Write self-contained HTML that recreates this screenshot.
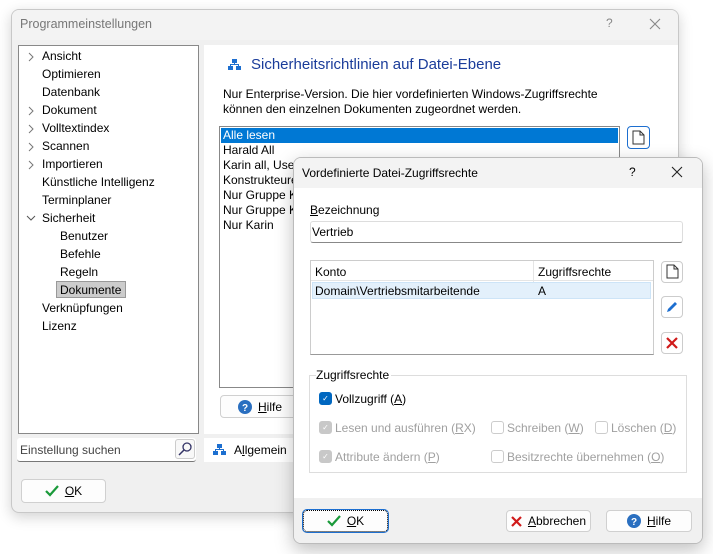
<!DOCTYPE html>
<html><head><meta charset="utf-8"><style>
*{box-sizing:border-box;margin:0;padding:0}
body{width:713px;height:554px;background:#fff;font-family:"Liberation Sans",sans-serif;font-size:12px;color:#000;position:relative;overflow:hidden}
.abs{position:absolute}
.win{left:11px;top:9px;width:668px;height:504px;background:#f0f0f0;border:1px solid #c8c8c8;border-radius:8px;box-shadow:0 4px 14px rgba(0,0,0,.18);overflow:hidden}
.tb{background:#f3f3f3}
.btn{position:absolute;background:#fdfdfd;border:1px solid #d0d0d0;border-radius:4px;height:23px;display:flex;align-items:center;justify-content:center;gap:6px;font-size:12px}
.t{position:absolute;white-space:nowrap}
.u{text-decoration:underline}
.cb{position:absolute;width:13px;height:13px;border:1px solid #ccc;border-radius:3px;background:#fff}
.cbg{background:#c8c8c8;border-color:#c8c8c8}
.gr{color:#a0a0a0}
.chev{position:absolute;left:27px}
</style></head><body>
<div class="abs win">
 <div class="abs tb" style="left:0;top:0;width:668px;height:30px"></div>
 <div class="t" style="left:8px;top:7px;color:#777;font-size:12.5px">Programmeinstellungen</div>
 <div class="t" style="left:594px;top:6px;color:#888">?</div>
 <svg class="abs" style="left:637px;top:8px" width="12" height="12"><path d="M1 1l10 10M11 1L1 11" stroke="#888" stroke-width="1.1"/></svg>
 <div class="abs" style="left:6px;top:35px;width:181px;height:389px;background:#fff;border:1px solid #888"></div>
 <div class="abs" style="left:192px;top:35px;width:476px;height:389px;background:#fff"></div>
</div>
<!-- tree chevrons -->
<svg class="chev" style="top:52px" width="8" height="10"><path d="M2 1l4 4-4 4" fill="none" stroke="#777"/></svg>
<svg class="chev" style="top:106px" width="8" height="10"><path d="M2 1l4 4-4 4" fill="none" stroke="#777"/></svg>
<svg class="chev" style="top:124px" width="8" height="10"><path d="M2 1l4 4-4 4" fill="none" stroke="#777"/></svg>
<svg class="chev" style="top:142px" width="8" height="10"><path d="M2 1l4 4-4 4" fill="none" stroke="#777"/></svg>
<svg class="chev" style="top:160px" width="8" height="10"><path d="M2 1l4 4-4 4" fill="none" stroke="#777"/></svg>
<svg class="abs" style="left:26px;top:214px" width="10" height="8"><path d="M1 2l4 4 4-4" fill="none" stroke="#555"/></svg>
<div class="t" style="left:42px;top:47px;line-height:18px">Ansicht<br>Optimieren<br>Datenbank<br>Dokument<br>Volltextindex<br>Scannen<br>Importieren<br>Künstliche Intelligenz<br>Terminplaner<br>Sicherheit</div>
<div class="t" style="left:60px;top:227px;line-height:18px">Benutzer<br>Befehle<br>Regeln</div>
<div class="abs" style="left:56px;top:281px;width:70px;height:17px;background:#ccc;border:1px solid #999"></div>
<div class="t" style="left:60px;top:281px;line-height:18px">Dokumente</div>
<div class="t" style="left:42px;top:299px;line-height:18px">Verknüpfungen<br>Lizenz</div>
<!-- search -->
<div class="abs" style="left:17px;top:438px;width:179px;height:24px;background:#fff;border-bottom:1px solid #777;border-radius:3px"></div>
<div class="t" style="left:20px;top:443px;color:#444">Einstellung suchen</div>
<div class="abs" style="left:175px;top:439px;width:20px;height:20px;border:1px solid #ccc;border-radius:3px;background:#f8f8f8"></div>
<svg class="abs" style="left:177px;top:441px" width="16" height="16"><circle cx="10" cy="6" r="4" fill="none" stroke="#336" stroke-width="1.3"/><line x1="7" y1="9" x2="2" y2="14" stroke="#336" stroke-width="1.5"/></svg>
<!-- right panel -->
<svg class="abs" style="left:228px;top:59px" width="14" height="11"><rect x="4" y="0" width="5" height="4" fill="#1d6fd0"/><rect x="0" y="7" width="5" height="4" fill="#1d6fd0"/><rect x="8" y="7" width="5" height="4" fill="#1d6fd0"/><path d="M6.5 4v2M2.5 7V5.5h8V7" stroke="#1d6fd0" fill="none"/></svg>
<div class="t" style="left:251px;top:56px;font-size:15px;color:#1a3c9a">Sicherheitsrichtlinien auf Datei-Ebene</div>
<div class="t" style="left:223px;top:87px;line-height:15px">Nur Enterprise-Version. Die hier vordefinierten Windows-Zugriffsrechte<br>können den einzelnen Dokumenten zugeordnet werden.</div>
<div class="abs" style="left:219px;top:126px;width:401px;height:262px;background:#fff;border:1px solid #888"></div>
<div class="abs" style="left:221px;top:128px;width:397px;height:15px;background:#0078d4"></div>
<div class="t" style="left:223px;top:128px;line-height:15px;color:#fff">Alle lesen</div>
<div class="t" style="left:223px;top:143px;line-height:15px">Harald All<br>Karin all, User<br>Konstrukteure<br>Nur Gruppe K<br>Nur Gruppe K<br>Nur Karin</div>
<div class="abs" style="left:627px;top:126px;width:23px;height:23px;border:1px solid #1d6fd0;border-radius:4px;background:#fff"></div>
<svg class="abs" style="left:632px;top:130px" width="13" height="15"><path d="M1 1h7l4 4v9H1z M8 1v4h4" fill="#fff" stroke="#333"/></svg>
<div class="btn" style="left:220px;top:395px;width:80px"><svg width="14" height="14"><circle cx="7" cy="7" r="7" fill="#2a6fc0"/><text x="7" y="11" font-size="10" font-weight="bold" text-anchor="middle" fill="#fff" font-family="Liberation Sans">?</text></svg><span><span class="u">H</span>ilfe</span></div>
<div class="abs" style="left:204px;top:438px;width:100px;height:24px;background:#fff"></div>
<svg class="abs" style="left:213px;top:444px" width="14" height="11"><rect x="4" y="0" width="5" height="4" fill="#1d6fd0"/><rect x="0" y="7" width="5" height="4" fill="#1d6fd0"/><rect x="8" y="7" width="5" height="4" fill="#1d6fd0"/><path d="M6.5 4v2M2.5 7V5.5h8V7" stroke="#1d6fd0" fill="none"/></svg>
<div class="t" style="left:234px;top:443px">A<span class="u">l</span>lgemein</div>
<div class="btn" style="left:21px;top:479px;width:85px;height:24px"><svg width="14" height="12"><path d="M1 6l4 4 8-9" fill="none" stroke="#1a9a3a" stroke-width="2.2"/></svg><span><span class="u">O</span>K</span></div>
<!-- dialog -->
<div class="abs" style="left:293px;top:157px;width:410px;height:387px;background:#fff;border:1px solid #bbb;border-radius:8px;box-shadow:0 6px 18px rgba(0,0,0,.25);overflow:hidden">
 <div class="abs tb" style="left:0;top:0;width:410px;height:30px"></div>
 <div class="abs" style="left:0;top:340px;width:410px;height:47px;background:#f0f0f0"></div>
</div>
<div class="t" style="left:302px;top:166px">Vordefinierte Datei-Zugriffsrechte</div>
<div class="t" style="left:629px;top:165px">?</div>
<svg class="abs" style="left:671px;top:166px" width="12" height="12"><path d="M1 1l10 10M11 1L1 11" stroke="#222" stroke-width="1.1"/></svg>
<div class="t" style="left:310px;top:203px"><span class="u">B</span>ezeichnung</div>
<div class="abs" style="left:310px;top:221px;width:373px;height:22px;border:1px solid #ddd;border-bottom:1px solid #888;border-radius:3px"></div>
<div class="t" style="left:312px;top:225px">Vertrieb</div>
<div class="abs" style="left:310px;top:260px;width:344px;height:95px;border:1px solid #ccc;border-bottom-color:#999"></div>
<div class="abs" style="left:311px;top:280px;width:342px;height:1px;background:#e5e5e5"></div>
<div class="abs" style="left:533px;top:261px;width:1px;height:38px;background:#e5e5e5"></div>
<div class="t" style="left:315px;top:265px">Konto</div>
<div class="t" style="left:538px;top:265px">Zugriffsrechte</div>
<div class="abs" style="left:312px;top:282px;width:339px;height:17px;background:#e3f0fb;border:1px solid #cde4f7"></div>
<div class="t" style="left:315px;top:284px">Domain\Vertriebsmitarbeitende</div>
<div class="t" style="left:538px;top:284px">A</div>
<div class="abs" style="left:661px;top:261px;width:22px;height:22px;border:1px solid #ccc;border-radius:4px"></div>
<svg class="abs" style="left:666px;top:264px" width="13" height="15"><path d="M1 1h7l4 4v9H1z M8 1v4h4" fill="#fff" stroke="#333"/></svg>
<div class="abs" style="left:661px;top:296px;width:22px;height:22px;border:1px solid #ccc;border-radius:4px"></div>
<svg class="abs" style="left:665px;top:300px" width="14" height="14"><path d="M2 12l1-3 7-7 2 2-7 7z" fill="#1d6fd0"/></svg>
<div class="abs" style="left:661px;top:332px;width:22px;height:22px;border:1px solid #ccc;border-radius:4px"></div>
<svg class="abs" style="left:666px;top:337px" width="12" height="12"><path d="M1 1l10 10M11 1L1 11" stroke="#d01a1a" stroke-width="2.2"/></svg>
<div class="abs" style="left:309px;top:375px;width:378px;height:98px;border:1px solid #ddd"></div>
<div class="t" style="left:316px;top:368px;background:#fff;padding-right:2px">Zugriffsrechte</div>
<div class="cb" style="left:319px;top:392px;background:#0067c0;border-color:#0067c0;color:#fff;font-size:8px;line-height:11px;text-align:center">✓</div>
<div class="t" style="left:335px;top:392px">Vollzugriff (<span class="u">A</span>)</div>
<div class="cb cbg" style="left:319px;top:421px;color:#fff;font-size:8px;line-height:11px;text-align:center">✓</div>
<div class="t gr" style="left:335px;top:421px">Lesen und ausführen (<span class="u">R</span>X)</div>
<div class="cb" style="left:491px;top:421px"></div>
<div class="t gr" style="left:507px;top:421px">Schreiben (<span class="u">W</span>)</div>
<div class="cb" style="left:595px;top:421px"></div>
<div class="t gr" style="left:611px;top:421px">Löschen (<span class="u">D</span>)</div>
<div class="cb cbg" style="left:319px;top:450px;color:#fff;font-size:8px;line-height:11px;text-align:center">✓</div>
<div class="t gr" style="left:335px;top:450px">Attribute ändern (<span class="u">P</span>)</div>
<div class="cb" style="left:491px;top:450px"></div>
<div class="t gr" style="left:507px;top:450px">Besitzrechte übernehmen (<span class="u">O</span>)</div>
<div class="btn" style="left:303px;top:510px;width:85px;height:22px;border:1px dotted #000;outline:1px solid #1d6fd0"><svg width="14" height="12"><path d="M1 6l4 4 8-9" fill="none" stroke="#1a9a3a" stroke-width="2.2"/></svg><span><span class="u">O</span>K</span></div>
<div class="btn" style="left:506px;top:510px;width:85px;height:22px"><svg width="11" height="11"><path d="M1 1l9 9M10 1L1 10" stroke="#d01a1a" stroke-width="2.2"/></svg><span><span class="u">A</span>bbrechen</span></div>
<div class="btn" style="left:606px;top:510px;width:86px;height:22px"><svg width="14" height="14"><circle cx="7" cy="7" r="7" fill="#2a6fc0"/><text x="7" y="11" font-size="10" font-weight="bold" text-anchor="middle" fill="#fff" font-family="Liberation Sans">?</text></svg><span><span class="u">H</span>ilfe</span></div>
</body></html>
